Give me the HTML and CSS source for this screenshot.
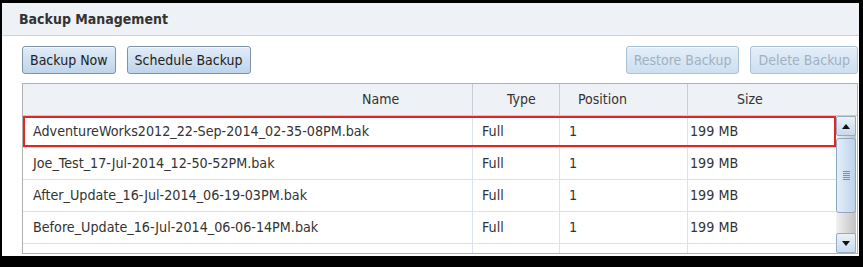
FILE: index.html
```html
<!DOCTYPE html>
<html>
<head>
<meta charset="utf-8">
<link rel="stylesheet" href="styles.css">
</head>
<body>
<div class="panel">
  <div class="title">Backup Management</div>
  <div class="content">
    <div class="toolbar">
      <button class="btn">Backup Now</button>
      <button class="btn">Schedule Backup</button>
      <span class="spacer"></span>
      <button class="btn" disabled>Restore Backup</button>
      <button class="btn" disabled>Delete Backup</button>
    </div>
    <div class="grid">
      <div class="head">
        <div class="c-name">Name</div>
        <div class="c-type">Type</div>
        <div class="c-pos">Position</div>
        <div class="c-size">Size</div>
      </div>
      <div class="body">
        <div class="rows">
          <div class="row sel">
            <div class="c-name">AdventureWorks2012_22-Sep-2014_02-35-08PM.bak</div>
            <div class="c-type">Full</div>
            <div class="c-pos">1</div>
            <div class="c-size">199 MB</div>
          </div>
          <div class="row">
            <div class="c-name">Joe_Test_17-Jul-2014_12-50-52PM.bak</div>
            <div class="c-type">Full</div>
            <div class="c-pos">1</div>
            <div class="c-size">199 MB</div>
          </div>
          <div class="row">
            <div class="c-name">After_Update_16-Jul-2014_06-19-03PM.bak</div>
            <div class="c-type">Full</div>
            <div class="c-pos">1</div>
            <div class="c-size">199 MB</div>
          </div>
          <div class="row">
            <div class="c-name">Before_Update_16-Jul-2014_06-06-14PM.bak</div>
            <div class="c-type">Full</div>
            <div class="c-pos">1</div>
            <div class="c-size">199 MB</div>
          </div>
          <div class="row">
            <div class="c-name">Joe_Test_16-Jul-2014_05-58-58PM.bak</div>
            <div class="c-type">Full</div>
            <div class="c-pos">1</div>
            <div class="c-size">199 MB</div>
          </div>
        </div>
        <div class="scrollbar">
          <div class="sb-btn"><svg width="8" height="5" viewBox="0 0 8 5"><polygon points="0,5 8,5 4,0" fill="#111"/></svg></div>
          <div class="sb-thumb"><span class="grip"></span></div>
          <div class="sb-track"></div>
          <div class="sb-btn"><svg width="8" height="5" viewBox="0 0 8 5"><polygon points="0,0 8,0 4,5" fill="#111"/></svg></div>
        </div>
      </div>
    </div>
  </div>
</div>
</body>
</html>
```

FILE: styles.css
```css
html, body {
  margin: 0;
  padding: 0;
}
body {
  background: #000;
  width: 863px;
  height: 267px;
  overflow: hidden;
  font-family: "DejaVu Sans", "Liberation Sans", sans-serif;
  font-stretch: condensed;
  font-size: 14px;
  color: #333;
}
.panel {
  margin: 3px 4px 0 2px;
  height: 253px;
  background: #fff;
  overflow: hidden;
}
.title {
  height: 32px;
  line-height: 32px;
  background: #eef1f6;
  border-bottom: 1px solid #cdd2d9;
  padding-left: 17px;
  font-weight: bold;
  font-size: 14px;
  color: #333;
}
.content {
  padding: 10px 1px 0 20px;
}
.toolbar {
  display: flex;
  gap: 11px;
  height: 28px;
}
.toolbar .spacer {
  flex: 1;
}
.btn {
  font: inherit;
  font-size: 14px;
  height: 28px;
  padding: 0 7px;
  border: 1px solid #7f93a8;
  border-radius: 3px;
  background: linear-gradient(#e2ecf7, #bed4eb);
  color: #222;
  box-shadow: inset 0 1px 0 rgba(255,255,255,0.6);
}
.btn:disabled {
  color: #a1b1c2;
  border-color: #aac0d5;
  background: linear-gradient(#e4eef8, #cddff1);
}
.grid {
  margin-top: 9px;
  border: 1px solid #b0b0b0;
  height: 171px;
  box-sizing: border-box;
  overflow: hidden;
}
.head {
  display: grid;
  grid-template-columns: 450px 87px 128px 1fr;
  height: 32px;
  box-sizing: border-box;
  background: #eef1f6;
  border-bottom: 1px solid #c8cdd4;
}
.head div {
  border-right: 1px solid #c8cdd4;
  line-height: 30px;
  white-space: nowrap;
}
.head div:last-child {
  border-right: none;
}
.head .c-name { padding-left: 339px; }
.head .c-type { padding-left: 34px; }
.head .c-pos { padding-left: 18px; }
.head .c-size { padding-left: 49px; }

.body {
  display: flex;
  height: 137px;
}
.rows {
  flex: 1;
  overflow: hidden;
}
.row {
  display: grid;
  grid-template-columns: 450px 87px 128px 1fr;
  height: 32px;
  box-sizing: border-box;
  border-bottom: 1px solid #dbe2ea;
}
.row div {
  border-right: 1px solid #dbe2ea;
  line-height: 30px;
  font-size: 14.2px;
  white-space: nowrap;
  overflow: hidden;
}
.row div:last-child {
  border-right: none;
}
.row .c-name { padding-left: 10px; }
.row .c-type { padding-left: 9px; }
.row .c-pos { padding-left: 9px; }
.row .c-size { padding-left: 2px; }

.row.sel {
  position: relative;
}
.row.sel::after {
  content: "";
  position: absolute;
  left: 0;
  top: 0;
  right: 0;
  bottom: 0;
  border: 2px solid #e3261f;
}

.scrollbar {
  width: 20px;
  margin-right: 1px;
  display: flex;
  flex-direction: column;
  background: linear-gradient(to right, #f2f2f2, #c2c2c2);
}
.sb-btn {
  height: 20px;
  box-sizing: border-box;
  border: 1px solid #97abc0;
  border-radius: 2px;
  background: linear-gradient(#eaf1f9, #c8daee);
  display: flex;
  align-items: center;
  justify-content: center;
}
.sb-thumb {
  margin-top: 2px;
  height: 75px;
  box-sizing: border-box;
  border: 1px solid #8fa6bf;
  border-radius: 3px;
  background: linear-gradient(to right, #e4eef9, #bdd3eb);
  display: flex;
  align-items: center;
  justify-content: center;
}
.grip {
  width: 7px;
  height: 9px;
  background: repeating-linear-gradient(#7d90a6 0 1px, transparent 1px 2px);
}
.sb-track {
  flex: 1;
}
```
